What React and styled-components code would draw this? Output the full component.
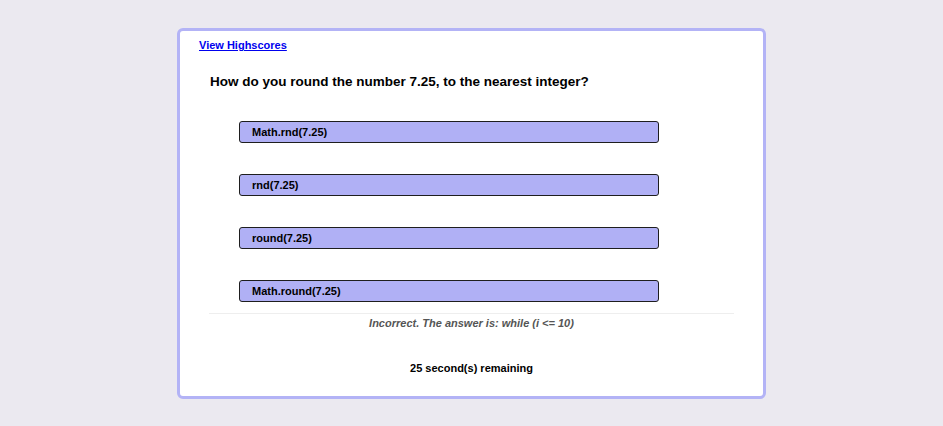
import React from 'react'
import styled, { createGlobalStyle } from 'styled-components'

const GlobalStyle = createGlobalStyle`
  body {
    margin: 0;
    background: #ebe9f0;
    font-family: "Liberation Sans", Arial, sans-serif;
  }
`

const choices = ['Math.rnd(7.25)', 'rnd(7.25)', 'round(7.25)', 'Math.round(7.25)']

const App = () => {
  return (
    <Page>
      <GlobalStyle />
      <Card>
        <HighscoreLink href="#">View Highscores</HighscoreLink>
        <Question>How do you round the number 7.25, to the nearest integer?</Question>
        <ChoiceList>
          {choices.map((c) => (
            <Choice key={c}>{c}</Choice>
          ))}
        </ChoiceList>
        <Divider />
        <Feedback>Incorrect. The answer is: while (i &lt;= 10)</Feedback>
        <Timer>25 second(s) remaining</Timer>
      </Card>
    </Page>
  )
}

const Page = styled.main`
  display: flex;
  justify-content: center;
  padding-top: 28px;
`

const Card = styled.section`
  box-sizing: border-box;
  width: 589px;
  background: #ffffff;
  border: 3px solid #b3b3f6;
  border-radius: 6px;
  padding: 8px 19px 22px;
  display: flex;
  flex-direction: column;
`

const HighscoreLink = styled.a`
  align-self: flex-start;
  font-size: 11px;
  font-weight: bold;
  color: #0000ee;
  text-decoration: underline;
`

const Question = styled.h2`
  margin: 23px 0 0 11px;
  font-size: 13.5px;
  font-weight: bold;
  color: #000;
`

const ChoiceList = styled.div`
  display: flex;
  flex-direction: column;
  gap: 31px;
  margin: 32px 0 0 40px;
`

const Choice = styled.button`
  box-sizing: border-box;
  width: 420px;
  height: 22px;
  text-align: left;
  padding: 0 12px;
  background: #b0b0f5;
  border: 1.5px solid #1e1e1e;
  border-radius: 3px;
  font-family: "Liberation Sans", Arial, sans-serif;
  font-size: 11px;
  font-weight: bold;
  color: #000;
  cursor: pointer;
`

const Divider = styled.hr`
  width: 525px;
  margin: 11px auto 0;
  border: none;
  border-top: 1px solid #eeeeee;
`

const Feedback = styled.p`
  margin: 3px 0 0;
  text-align: center;
  font-size: 11px;
  font-style: italic;
  font-weight: bold;
  color: #555;
`

const Timer = styled.p`
  margin: 33px 0 0;
  text-align: center;
  font-size: 11px;
  font-weight: bold;
  color: #000;
`

export default App
